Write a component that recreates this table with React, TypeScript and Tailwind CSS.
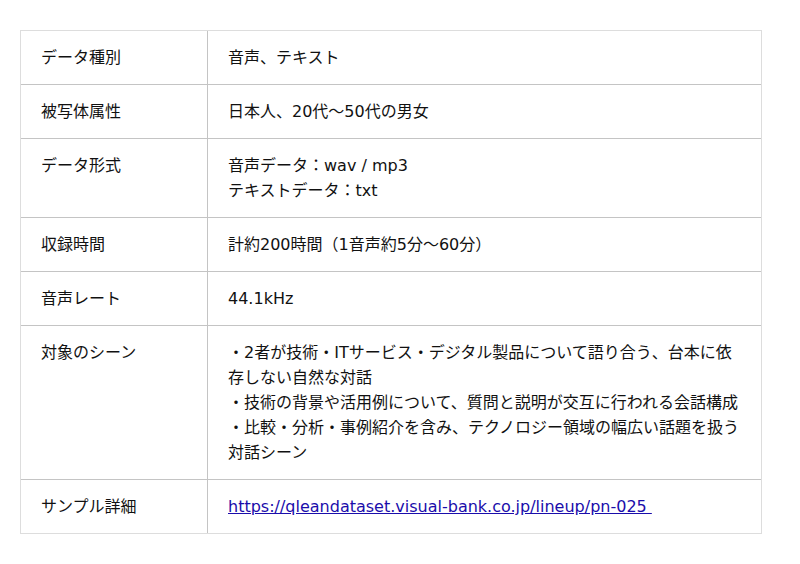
import React from "react";

const rows: { label: string; value: React.ReactNode }[] = [
  { label: "データ種別", value: "音声、テキスト" },
  { label: "被写体属性", value: "日本人、20代〜50代の男女" },
  {
    label: "データ形式",
    value: (
      <>
        音声データ：wav / mp3
        <br />
        テキストデータ：txt
      </>
    ),
  },
  { label: "収録時間", value: "計約200時間（1音声約5分〜60分）" },
  { label: "音声レート", value: "44.1kHz" },
  {
    label: "対象のシーン",
    value: (
      <>
        ・2者が技術・ITサービス・デジタル製品について語り合う、台本に依存しない自然な対話
        <br />
        ・技術の背景や活用例について、質問と説明が交互に行われる会話構成
        <br />
        ・比較・分析・事例紹介を含み、テクノロジー領域の幅広い話題を扱う対話シーン
      </>
    ),
  },
  {
    label: "サンプル詳細",
    value: (
      <a href="#" className="text-[#1a0dab] underline">
        {"https://qleandataset.visual-bank.co.jp/lineup/pn-025\u00a0"}
      </a>
    ),
  },
];

export default function App() {
  return (
    <div
      className="bg-white w-[800px] h-[564px] pt-[30px] pl-[20px]"
      style={{ fontFamily: '"DejaVu Sans", "Noto Sans CJK JP", sans-serif' }}
    >
      <div className="w-[742px] border border-[#dddddd] text-[16px] leading-[25px] text-[#111]">
        {rows.map((r, i) => (
          <div
            key={i}
            className={`flex ${i > 0 ? "border-t border-[#c4c4c4]" : ""}`}
          >
            <div className="w-[187px] shrink-0 border-r border-[#c4c4c4] px-[20px] py-[14px]">
              {r.label}
            </div>
            <div className="flex-1 px-[20px] py-[14px]">{r.value}</div>
          </div>
        ))}
      </div>
    </div>
  );
}
